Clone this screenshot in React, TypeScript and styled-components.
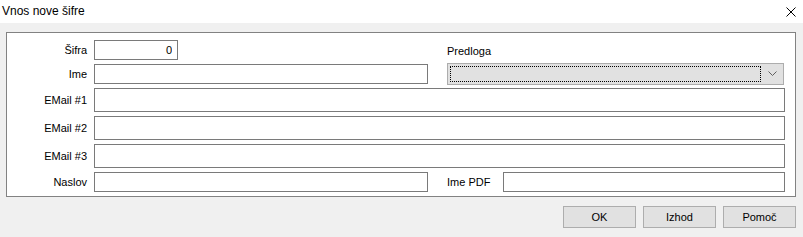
import styled, { createGlobalStyle } from "styled-components";

const GlobalStyle = createGlobalStyle`
    html, body {
        margin: 0;
        padding: 0;
        background: #f0f0f0;
    }
    body {
        font-family: "Liberation Sans", Arial, sans-serif;
        font-size: 11px;
        color: #000;
    }
`;

const App = () => {
    return (
        <StyledWindow>
            <GlobalStyle />
            <StyledTitleBar>
                <StyledTitle>Vnos nove šifre</StyledTitle>
                <StyledClose aria-label="close">
                    <svg width="10" height="10" viewBox="0 0 10 10">
                        <path d="M0.5 0.5 L9.5 9.5 M9.5 0.5 L0.5 9.5" stroke="#000" strokeWidth="1" />
                    </svg>
                </StyledClose>
            </StyledTitleBar>

            <StyledBody>
                <StyledPanel>
                    <StyledRow $height={20}>
                        <StyledLabel>Šifra</StyledLabel>
                        <StyledInput $width={84} $align="right" defaultValue="0" />
                        <StyledSideLabel $bottom>Predloga</StyledSideLabel>
                    </StyledRow>

                    <StyledRow $height={20}>
                        <StyledLabel>Ime</StyledLabel>
                        <StyledInput $width={334} />
                        <StyledSelect>
                            <StyledFocus />
                            <StyledChevron width="9" height="5" viewBox="0 0 9 5">
                                <path d="M0.5 0.5 L4.5 4.5 L8.5 0.5" fill="none" stroke="#606060" strokeWidth="1" />
                            </StyledChevron>
                        </StyledSelect>
                    </StyledRow>

                    <StyledRow $height={24}>
                        <StyledLabel>EMail #1</StyledLabel>
                        <StyledInput />
                    </StyledRow>
                    <StyledRow $height={24}>
                        <StyledLabel>EMail #2</StyledLabel>
                        <StyledInput />
                    </StyledRow>
                    <StyledRow $height={24}>
                        <StyledLabel>EMail #3</StyledLabel>
                        <StyledInput />
                    </StyledRow>

                    <StyledRow $height={20}>
                        <StyledLabel>Naslov</StyledLabel>
                        <StyledInput $width={334} />
                        <StyledPdfLabel>Ime PDF</StyledPdfLabel>
                        <StyledInput />
                    </StyledRow>
                </StyledPanel>

                <StyledButtons>
                    <StyledButton>OK</StyledButton>
                    <StyledButton>Izhod</StyledButton>
                    <StyledButton>Pomoč</StyledButton>
                </StyledButtons>
            </StyledBody>
        </StyledWindow>
    )
}

const StyledWindow = styled.div`
    width: 803px;
    height: 237px;
    background: #f0f0f0;
    display: flex;
    flex-direction: column;
`;

const StyledTitleBar = styled.div`
    height: 23px;
    background: #fff;
    display: flex;
    align-items: center;
    justify-content: space-between;
    padding: 0 7px 0 2px;
`;

const StyledTitle = styled.span`
    font-size: 12px;
    margin-top: -1px;
`;

const StyledClose = styled.div`
    width: 10px;
    height: 10px;
    display: flex;
    margin-top: 1px;
`;

const StyledBody = styled.div`
    padding: 9px 7px 0 6px;
    display: grid;
    gap: 9px;
`;

const StyledPanel = styled.div`
    background: #fff;
    border: 1px solid #828282;
    padding: 7px 10px 4px 0;
    display: grid;
    row-gap: 4px;
`;

const StyledRow = styled.div<{ $height: number }>`
    display: flex;
    align-items: center;
    height: ${(p) => p.$height}px;
`;

const StyledLabel = styled.label`
    width: 80px;
    margin-right: 7px;
    text-align: right;
    flex-shrink: 0;
`;

const StyledInput = styled.input<{ $width?: number; $align?: string }>`
    box-sizing: border-box;
    height: 100%;
    ${(p) => (p.$width ? `width: ${p.$width}px; flex-shrink: 0;` : "flex: 1; min-width: 0;")}
    border: 1px solid #7a7a7a;
    background: #fff;
    margin: 0;
    padding: 0 5px;
    font: inherit;
    text-align: ${(p) => p.$align || "left"};
    outline: none;
`;

const StyledSideLabel = styled.span<{ $bottom?: boolean }>`
    margin-left: auto;
    width: 338px;
    align-self: ${(p) => (p.$bottom ? "flex-end" : "center")};
    margin-bottom: 3px;
`;

const StyledSelect = styled.div`
    box-sizing: border-box;
    flex: 1;
    margin-left: 19px;
    margin-right: 1px;
    height: 22px;
    margin-top: -1px;
    background: #e1e1e1;
    border: 1px solid #adadad;
    display: flex;
    align-items: center;
    padding: 0 6px 0 2px;
    gap: 7px;
`;

const StyledFocus = styled.div`
    flex: 1;
    height: 16px;
    box-sizing: border-box;
    border: 1px dotted #000;
`;

const StyledChevron = styled.svg`
    flex-shrink: 0;
`;

const StyledPdfLabel = styled.span`
    width: 56px;
    margin-left: 19px;
    flex-shrink: 0;
`;

const StyledButtons = styled.div`
    display: flex;
    justify-content: flex-end;
    gap: 7px;
`;

const StyledButton = styled.button`
    width: 73px;
    height: 22px;
    margin: 0;
    background: #e1e1e1;
    border: 1px solid #adadad;
    font: inherit;
    font-size: 11px;
    color: #000;
    padding: 0;
`;

export default App;
